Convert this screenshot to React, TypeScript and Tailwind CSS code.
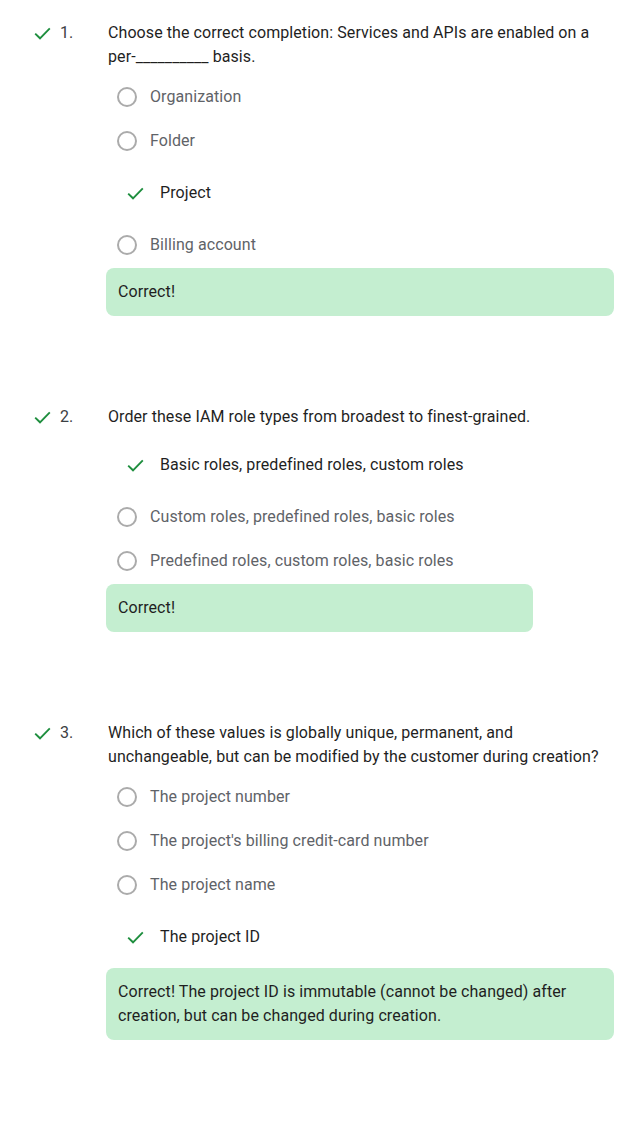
import React from "react";

type Opt = { text: string; correct?: boolean };
type Q = { n: number; lines: string[]; options: Opt[]; feedback: string[]; boxW: string };

const Check = ({ className = "" }: { className?: string }) => (
  <svg width="17" height="13" viewBox="0 0 17 13" className={className} fill="none">
    <path d="M1.2 6.6 L6 11.3 L15.8 1.4" stroke="#1e8e3e" strokeWidth="1.9" strokeLinecap="butt" strokeLinejoin="miter" />
  </svg>
);

const questions: Q[] = [
  {
    n: 1,
    lines: ["Choose the correct completion: Services and APIs are enabled on a", "per-__________ basis."],
    options: [
      { text: "Organization" },
      { text: "Folder" },
      { text: "Project", correct: true },
      { text: "Billing account" },
    ],
    feedback: ["Correct!"],
    boxW: "w-[508px]",
  },
  {
    n: 2,
    lines: ["Order these IAM role types from broadest to finest-grained."],
    options: [
      { text: "Basic roles, predefined roles, custom roles", correct: true },
      { text: "Custom roles, predefined roles, basic roles" },
      { text: "Predefined roles, custom roles, basic roles" },
    ],
    feedback: ["Correct!"],
    boxW: "w-[427px]",
  },
  {
    n: 3,
    lines: [
      "Which of these values is globally unique, permanent, and",
      "unchangeable, but can be modified by the customer during creation?",
    ],
    options: [
      { text: "The project number" },
      { text: "The project's billing credit-card number" },
      { text: "The project name" },
      { text: "The project ID", correct: true },
    ],
    feedback: ["Correct! The project ID is immutable (cannot be changed) after", "creation, but can be changed during creation."],
    boxW: "w-[508px]",
  },
];

export default function App() {
  return (
    <div
      className="min-h-[1124px] w-[627px] bg-white pt-[21px] text-[16px] leading-[24px] tracking-[0.08px] text-[#1f1f1f]"
      style={{ fontFamily: "Roboto, 'Noto Sans', Arial, sans-serif" }}
    >
      {questions.map((q, qi) => (
        <div key={q.n} className={`flex ${qi > 0 ? "mt-[89px]" : ""}`}>
          <div className="flex w-[106px] shrink-0 items-start pl-[34px]">
            <div className="flex h-[24px] items-center">
              <Check />
            </div>
            <span className="ml-[9px] text-[#3c4043]">{q.n}.</span>
          </div>
          <div className="flex flex-col">
            <div className="pl-[2px]">
              {q.lines.map((l, i) => (
                <div key={i} className="whitespace-nowrap">
                  {l}
                </div>
              ))}
            </div>
            <div className="mt-[6px] flex flex-col">
              {q.options.map((o, i) =>
                o.correct ? (
                  <div key={i} className="flex h-[60px] items-center pl-[21px]">
                    <Check />
                    <span className="ml-[16px] text-[#1f1f1f]">{o.text}</span>
                  </div>
                ) : (
                  <div key={i} className="flex h-[44px] items-center pl-[11px]">
                    <span className="box-border h-[20px] w-[20px] rounded-full border-2 border-[#ababab]" />
                    <span className="ml-[13px] text-[#5f6368]">{o.text}</span>
                  </div>
                )
              )}
            </div>
            <div className={`mt-[1px] ${q.boxW} rounded-[8px] bg-[#c4eed0] px-[12px] py-[12px] text-[#1f1f1f]`}>
              {q.feedback.map((l, i) => (
                <div key={i} className="whitespace-nowrap">
                  {l}
                </div>
              ))}
            </div>
          </div>
        </div>
      ))}
    </div>
  );
}
